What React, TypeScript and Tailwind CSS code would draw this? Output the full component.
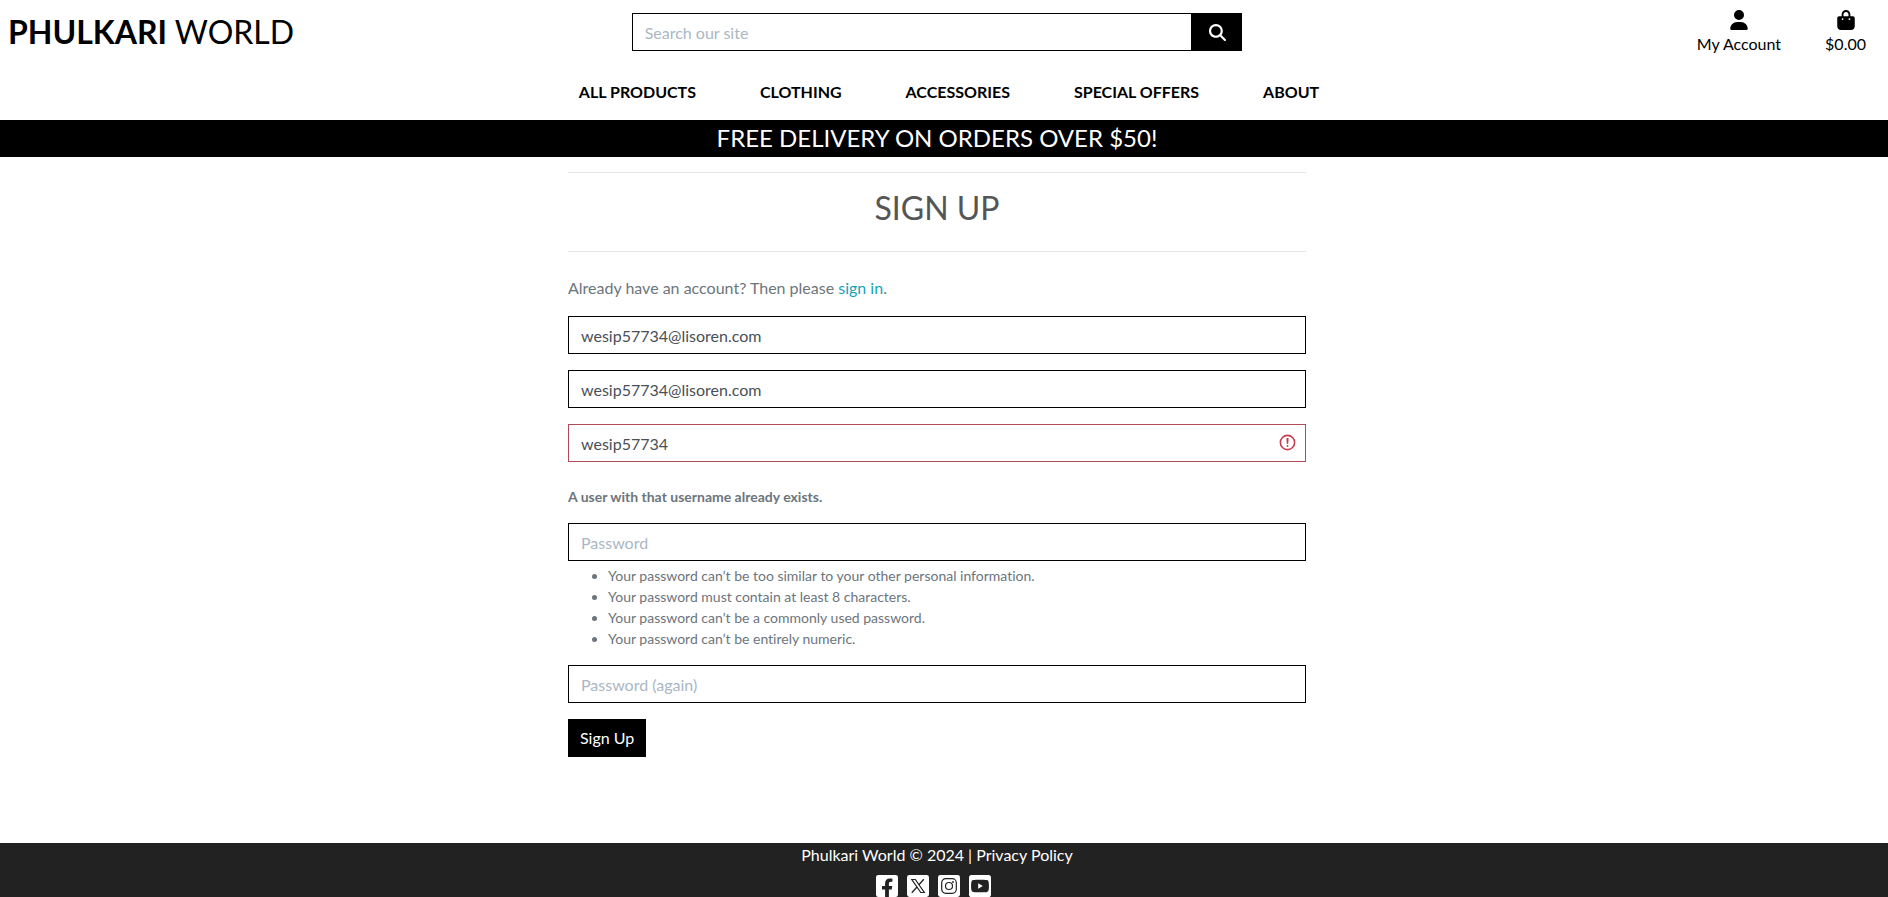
import type { InputHTMLAttributes } from "react";
import { FaFacebookSquare, FaYoutubeSquare } from "react-icons/fa";
import { FaBagShopping, FaMagnifyingGlass, FaUser } from "react-icons/fa6";

const navItems = ["All Products", "Clothing", "Accessories", "Special Offers", "About"];

const passwordRules = [
  "Your password can’t be too similar to your other personal information.",
  "Your password must contain at least 8 characters.",
  "Your password can’t be a commonly used password.",
  "Your password can’t be entirely numeric.",
];

function SquareX() {
  return (
    <svg viewBox="0 0 22 22" className="size-[22px]" aria-hidden="true">
      <rect width="22" height="22" rx="2.4" fill="#fff" />
      <path d="M4.8 4.5h3.5l9 13h-3.5z" fill="none" stroke="#222" strokeWidth="1.2" />
      <path d="M16.8 4.2 11.9 9.7M10.2 11.7 4.8 17.8" stroke="#222" strokeWidth="1.3" />
    </svg>
  );
}

function SquareInstagram() {
  return (
    <svg viewBox="0 0 22 22" className="size-[22px]" aria-hidden="true">
      <rect width="22" height="22" rx="2.4" fill="#fff" />
      <rect x="3.7" y="3.7" width="14.6" height="14.6" rx="4" fill="none" stroke="#222" strokeWidth="1.2" />
      <circle cx="11" cy="11" r="3.5" fill="none" stroke="#222" strokeWidth="1.2" />
      <circle cx="15" cy="7" r="0.9" fill="#222" />
    </svg>
  );
}

const socials = [
  { name: "Facebook", icon: <FaFacebookSquare size={22} viewBox="0 32 448 448" /> },
  { name: "X", icon: <SquareX /> },
  { name: "Instagram", icon: <SquareInstagram /> },
  { name: "YouTube", icon: <FaYoutubeSquare size={22} viewBox="0 32 448 448" /> },
];

type FieldProps = InputHTMLAttributes<HTMLInputElement> & { label: string; invalid?: boolean };

function Field({ label, invalid, ...rest }: FieldProps) {
  return (
    <div className="relative">
      <input
        aria-label={label}
        aria-invalid={invalid}
        placeholder={label}
        className={`block h-[38px] w-full border bg-white px-3 text-[#495057] outline-none placeholder:text-[#aab7c4] ${
          invalid ? "border-[#b04a59]" : "border-black"
        }`}
        {...rest}
      />
      {invalid && (
        <svg
          viewBox="0 0 12 12"
          fill="none"
          stroke="#c43e50"
          className="absolute top-[9px] right-[9px] size-[19px]"
          aria-hidden="true"
        >
          <circle cx="6" cy="6" r="4.5" />
          <path strokeLinejoin="round" d="M5.8 3.6h.4L6 6.5z" />
          <circle cx="6" cy="8.2" r=".6" fill="#c43e50" stroke="none" />
        </svg>
      )}
    </div>
  );
}

function Header() {
  return (
    <header>
      <div className="grid h-16 grid-cols-3 pr-[14px]">
        <a href="#" className="px-2 pt-2 text-[32px] leading-12 text-black uppercase">
          <strong className="font-bold">Phulkari</strong> World
        </a>
        <form role="search" className="flex px-[7px] pt-[13px]" onSubmit={(e) => e.preventDefault()}>
          <input
            type="text"
            aria-label="Search our site"
            placeholder="Search our site"
            className="h-[38px] min-w-0 flex-1 border border-black px-3 outline-none placeholder:text-[#aab7c4]"
          />
          <button
            type="submit"
            aria-label="Search"
            className="flex h-[38px] w-[50px] items-center justify-center bg-black text-white"
          >
            <FaMagnifyingGlass size={17} />
          </button>
        </form>
        <div className="flex items-start justify-end gap-11 px-2 pt-[10px] text-black">
          <a href="#" className="flex flex-col items-center">
            <FaUser size={20} />
            <span className="leading-7">My Account</span>
          </a>
          <a href="#" className="flex flex-col items-center">
            <FaBagShopping size={20} />
            <span className="leading-7">$0.00</span>
          </a>
        </div>
      </div>
      <nav className="flex h-14 justify-center gap-16 pr-[14px] pl-6 leading-14 font-bold text-black uppercase">
        {navItems.map((item) => (
          <a key={item} href="#">
            {item}
          </a>
        ))}
      </nav>
    </header>
  );
}

export default function App() {
  return (
    <div className="flex min-h-screen flex-col bg-white font-['Lato',sans-serif] text-base text-[#555] [font-variant-ligatures:none]">
      <Header />
      <div className="h-[37px] bg-black pr-[14px] text-center text-2xl leading-[36px] text-white uppercase">
        Free delivery on orders over $50!
      </div>

      <main className="flex-1 pt-[15px] pr-[14px]">
        <div className="mx-auto w-full max-w-[738px]">
          <hr className="border-[#e5e5e5]" />
          <h1 className="pt-[15px] pb-[23px] text-center text-[32px] leading-10 text-[#555] uppercase">Sign Up</h1>
          <hr className="border-[#e5e5e5]" />
          <p className="mt-6 mb-4 text-[#6c757d]">
            Already have an account? Then please{" "}
            <a href="#" className="text-[#17a2b8]">
              sign in
            </a>
            .
          </p>
          <form className="flex flex-col gap-4" onSubmit={(e) => e.preventDefault()}>
            <Field label="E-mail address" type="email" defaultValue="wesip57734@lisoren.com" />
            <Field label="E-mail address confirmation" type="email" defaultValue="wesip57734@lisoren.com" />
            <div>
              <Field label="Username" type="text" defaultValue="wesip57734" invalid />
              <p className="mt-6 text-sm leading-[21px] font-bold text-[#6c757d]">
                A user with that username already exists.
              </p>
            </div>
            <div>
              <Field label="Password" type="password" />
              <ul className="mt-1 list-disc pl-10 text-sm leading-[21px] text-[#6c757d]">
                {passwordRules.map((rule) => (
                  <li key={rule}>{rule}</li>
                ))}
              </ul>
            </div>
            <Field label="Password (again)" type="password" />
            <button type="submit" className="h-[38px] self-start bg-black px-3 text-white">
              Sign Up
            </button>
          </form>
        </div>
      </main>

      <footer className="flex flex-col items-center bg-[#222] pr-[14px] text-white">
        <p>
          Phulkari World © 2024 | <a href="#">Privacy Policy</a>
        </p>
        <div className="mt-2 flex gap-[9px] pr-2">
          {socials.map(({ name, icon }) => (
            <a key={name} href="#" aria-label={name}>
              {icon}
            </a>
          ))}
        </div>
      </footer>
    </div>
  );
}
